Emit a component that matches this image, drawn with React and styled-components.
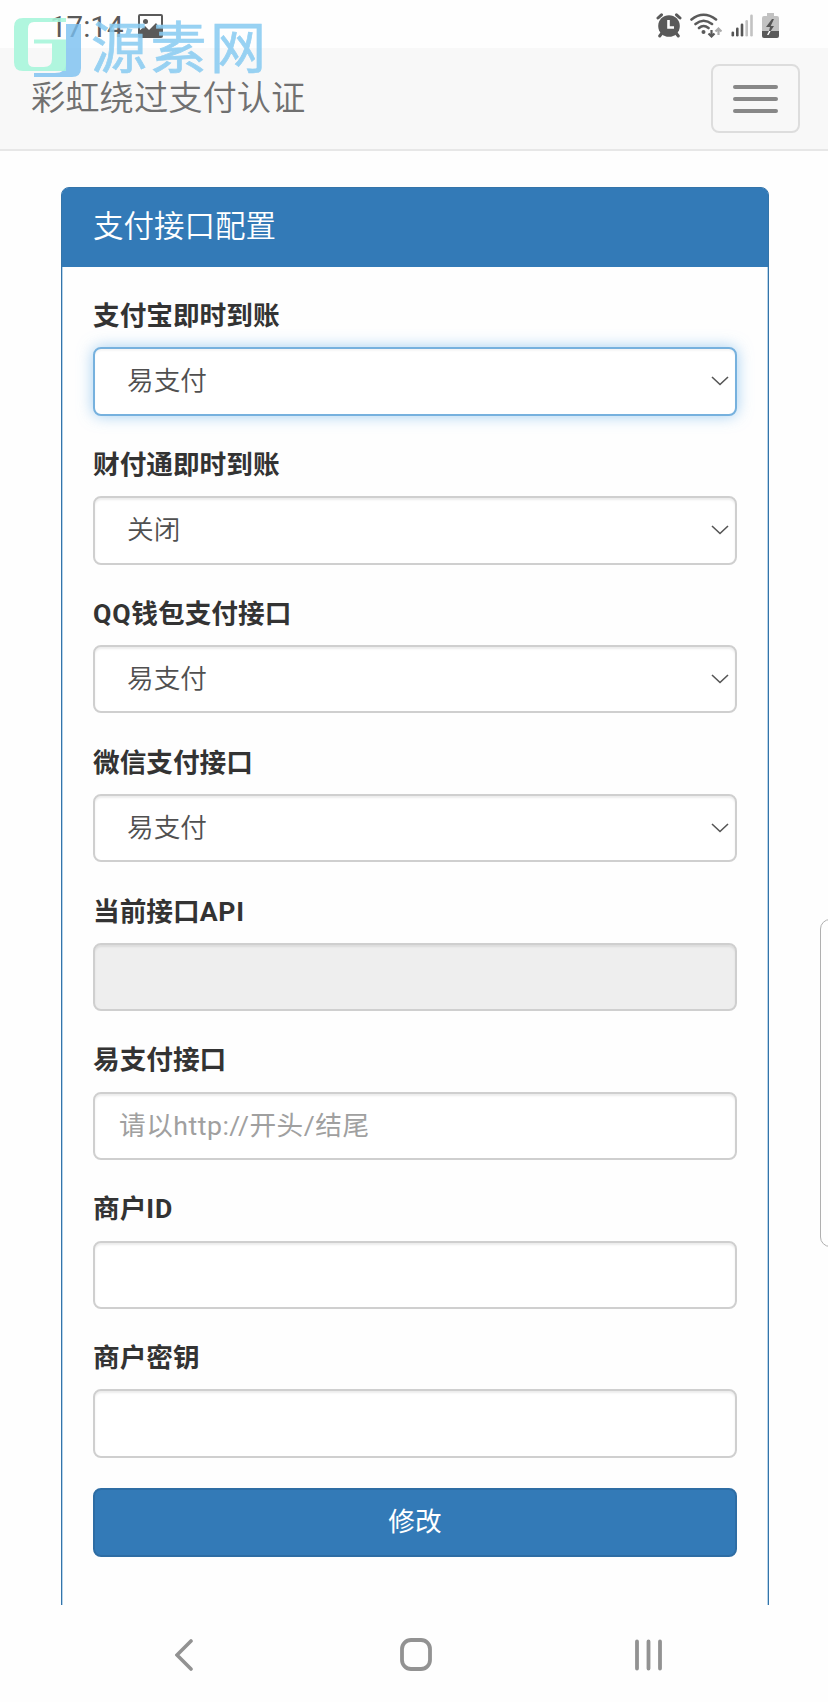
import React from "react";
import styled, { createGlobalStyle, css } from "styled-components";

const GlobalStyle = createGlobalStyle`
  * {
    box-sizing: border-box;
  }
  body {
    margin: 0;
    background: #fefefe;
    font-family: Roboto, "Noto Sans CJK SC", sans-serif;
    font-size: 26.67px;
    color: #333;
  }
`;

const Screen = styled.div`
  position: relative;
  display: flex;
  flex-direction: column;
  width: 828px;
  height: 1702px;
  overflow: hidden;
`;

const StatusBar = styled.div`
  display: flex;
  flex: none;
  align-items: center;
  justify-content: space-between;
  height: 48px;
  padding: 3px 49px 0 50px;
`;

const StatusGroup = styled.div`
  display: flex;
  align-items: center;
  gap: ${(props) => props.$gap}px;
`;

const Clock = styled.span`
  font-size: 29.5px;
  line-height: 40px;
  font-weight: 400;
  padding-top: 2px;
  color: #5a5a5a;
`;

const Navbar = styled.nav`
  display: flex;
  flex: none;
  align-items: center;
  justify-content: space-between;
  height: 103px;
  padding: 0 28px 0 31px;
  background: #f8f8f8;
  border-bottom: 2px solid #e7e7e7;
`;

const Brand = styled.span`
  padding-bottom: 2px;
  font-size: 34.3px;
  line-height: 40px;
  font-weight: 350;
  color: #707070;
`;

const Toggle = styled.button`
  display: flex;
  flex-direction: column;
  align-items: center;
  justify-content: center;
  gap: 8px;
  width: 89px;
  height: 69px;
  padding: 0;
  background: transparent;
  border: 2px solid #ddd;
  border-radius: 8px;
`;

const ToggleBar = styled.span`
  width: 45px;
  height: 4px;
  border-radius: 2px;
  background: #888;
`;

const Content = styled.main`
  flex: none;
  height: 1454px;
  padding: 36px 59px 0 61px;
  overflow: hidden;
`;

const Panel = styled.section`
  height: 1500px;
  border: 1px solid #3474a9;
  border-radius: 8px;
  box-shadow: inset 0 0 0 1px #b5d3ea;
`;

const PanelHeading = styled.h3`
  height: 79px;
  margin: 0;
  padding: 0 31px;
  font-size: 30.5px;
  line-height: 77px;
  font-weight: 350;
  color: #fff;
  background: #337ab7;
  border-radius: 6px 6px 0 0;
`;

const PanelBody = styled.form`
  padding: 29px 31px;
`;

const FormGroup = styled.div`
  margin-bottom: 29.2px;
`;

const Label = styled.label`
  display: block;
  height: 42px;
  margin-bottom: 9.3px;
  font-weight: 700;
  line-height: 41px;
  color: #333;
`;

const Latin = styled.span`
  letter-spacing: 0.8px;
`;

const control = css`
  width: 100%;
  height: 68.4px;
  border: 2px solid #cfcfcf;
  border-radius: 8px;
  background: #fff;
  box-shadow: inset 0 2px 2px rgba(0, 0, 0, 0.075);
`;

const SelectBox = styled.div`
  ${control}
  display: flex;
  align-items: center;
  justify-content: space-between;
  padding: 0 6px 0 32px;
  font-weight: 350;
  line-height: 40px;
  color: #505050;
  ${(props) =>
    props.$focused &&
    css`
      border-color: #76b1de;
      box-shadow: inset 0 2px 2px rgba(0, 0, 0, 0.04),
        0 0 15px rgba(102, 175, 233, 0.6);
    `}
`;

const Input = styled.input`
  ${control}
  display: block;
  padding: 0 24px;
  font: inherit;
  letter-spacing: 0.5px;
  color: #555;
  outline: none;

  &::placeholder {
    color: #a0a0a0;
    opacity: 1;
  }
  &:disabled {
    background: #eee;
  }
`;

const SubmitButton = styled.button`
  display: block;
  width: 100%;
  height: 69px;
  margin-top: 30px;
  padding: 0 0 5px;
  font: inherit;
  color: #fff;
  background: #337ab7;
  border: 2px solid #2e6da4;
  border-radius: 8px;
`;

const SystemNav = styled.div`
  display: flex;
  flex: 1;
  align-items: center;
  justify-content: space-between;
  padding: 2px 165px 0 175px;
`;

const HomeSlot = styled.span`
  display: flex;
  margin-left: 5px;
`;

const EdgeHandle = styled.div`
  position: absolute;
  top: 919px;
  right: -12px;
  width: 20px;
  height: 328px;
  border: 1px solid #b0b0b0;
  border-radius: 12px;
`;

const Watermark = styled.div`
  position: absolute;
  top: 16px;
  left: 12px;
  display: flex;
  align-items: flex-start;
`;

const WatermarkText = styled.span`
  margin: -4px 0 0 9px;
  font-family: "Noto Sans CJK SC", sans-serif;
  font-size: 56px;
  line-height: 64px;
  font-weight: 400;
  letter-spacing: 3.5px;
  color: #8accf2;
  -webkit-text-stroke: 0.7px #8accf2;
  opacity: 0.88;
`;

const PictureIcon = () => (
  <svg width="25" height="24" viewBox="0 0 25 24">
    <rect x="1" y="1" width="23" height="22" rx="1" fill="none" stroke="#5a5a5a" strokeWidth="2" />
    <circle cx="7.5" cy="7.5" r="2.5" fill="#5a5a5a" />
    <path d="M1 17l6-5 4 4 7-7 3 4 3-1v11H1z" fill="#5a5a5a" />
  </svg>
);

const AlarmIcon = () => (
  <svg width="26" height="25" viewBox="0 0 26 25">
    <g stroke="#5a5a5a" strokeWidth="3" strokeLinecap="round">
      <path d="M2 5l3.5-3.2M24 5l-3.5-3.2M6 20l-2.3 3M20 20l2.3 3" />
    </g>
    <circle cx="13" cy="13" r="10.8" fill="#5a5a5a" />
    <path d="M12.5 7v7.5H18" fill="none" stroke="#fff" strokeWidth="2.6" />
  </svg>
);

const WifiIcon = () => (
  <svg width="32" height="25" viewBox="0 0 32 25">
    <g fill="none" stroke="#5a5a5a" strokeWidth="2.6" strokeLinecap="round">
      <path d="M1.5 6.5Q13.5-3 26 6.5M5.5 11Q13.5 4.5 22 11M9 15Q13.5 11 18.5 15" />
    </g>
    <circle cx="13.5" cy="19" r="2" fill="#5a5a5a" />
    <path d="M21.5 17v6M18.5 20.5l3 3 3-3" fill="none" stroke="#5a5a5a" strokeWidth="2.2" />
    <path d="M28.5 22v-6M25.5 18.5l3-3 3 3" fill="none" stroke="#aaa" strokeWidth="2.2" />
  </svg>
);

const SignalIcon = () => (
  <svg width="23" height="23" viewBox="0 0 23 23">
    <rect x="0.5" y="17.5" width="2.6" height="5" rx="1.3" fill="#555" />
    <rect x="5" y="13.5" width="2.6" height="9" rx="1.3" fill="#555" />
    <rect x="9.7" y="9.5" width="2.6" height="13" rx="1.3" fill="#555" />
    <rect x="14.4" y="6" width="2.6" height="16.5" rx="1.3" fill="#c2c2c2" />
    <rect x="19.2" y="0.5" width="2.6" height="22" rx="1.3" fill="#c2c2c2" />
  </svg>
);

const BatteryIcon = () => (
  <svg width="17" height="25" viewBox="0 0 17 25">
    <path d="M5 0h7v3h3q2 0 2 2v13H0V5q0-2 2-2h3z" fill="#c2c2c2" />
    <path d="M0 18h17v5q0 2-2 2H2q-2 0-2-2z" fill="#5a5a5a" />
    <path d="M10 6L4 14h4l-2 8 6-9H8.7L12 6z" fill="#555" />
    <path d="M7 18h1.7L6.5 22H5z" fill="#fff" />
  </svg>
);

const ChevronIcon = () => (
  <svg width="18" height="10" viewBox="0 0 18 10">
    <path d="M1 1l8 7.5L17 1" fill="none" stroke="#555" strokeWidth="1.6" />
  </svg>
);

const BackIcon = () => (
  <svg width="18" height="32" viewBox="0 0 18 32">
    <path d="M16 2L2 16l14 14" fill="none" stroke="#929292" strokeWidth="3.6" strokeLinecap="round" />
  </svg>
);

const HomeIcon = () => (
  <svg width="32" height="33" viewBox="0 0 32 33">
    <rect x="2" y="2" width="28" height="29" rx="9" fill="none" stroke="#929292" strokeWidth="3.8" />
  </svg>
);

const RecentsIcon = () => (
  <svg width="29" height="32" viewBox="0 0 29 32">
    <path d="M3 2.5v27M14.5 2.5v27M26 2.5v27" stroke="#929292" strokeWidth="3.8" strokeLinecap="round" />
  </svg>
);

const WatermarkLogo = () => (
  <svg width="70" height="64" viewBox="12 16 70 64">
    <path
      d="M66 24h15v44q0 9-9 9H34v-4h21q11 0 11-10z"
      fill="#79bff0"
      opacity="0.8"
    />
    <path
      d="M66 18v4H34q-6 0-6 7v32q0 6 6 6h10q8 0 8-8V43.5H34v-4h32V71H23q-9 0-9-9V27q0-9 9-9z"
      fill="#a5f5da"
      opacity="0.88"
    />
  </svg>
);

const selects = [
  { label: "支付宝即时到账", value: "易支付", focused: true },
  { label: "财付通即时到账", value: "关闭" },
  { label: "QQ钱包支付接口", value: "易支付" },
  { label: "微信支付接口", value: "易支付" },
];

const inputs = [
  { label: "当前接口API", disabled: true },
  { label: "易支付接口", placeholder: "请以http://开头/结尾" },
  { label: "商户ID" },
  { label: "商户密钥" },
];

const FieldLabel = ({ text }) => (
  <Label>
    {text
      .split(/([A-Z]+)/)
      .map((part, index) =>
        /[A-Z]/.test(part) ? <Latin key={index}>{part}</Latin> : part
      )}
  </Label>
);

const App = () => {
  return (
    <Screen>
      <GlobalStyle />
      <StatusBar>
        <StatusGroup $gap={15}>
          <Clock>17:14</Clock>
          <PictureIcon />
        </StatusGroup>
        <StatusGroup $gap={8.5}>
          <AlarmIcon />
          <WifiIcon />
          <SignalIcon />
          <BatteryIcon />
        </StatusGroup>
      </StatusBar>
      <Navbar>
        <Brand>彩虹绕过支付认证</Brand>
        <Toggle type="button">
          <ToggleBar />
          <ToggleBar />
          <ToggleBar />
        </Toggle>
      </Navbar>
      <Content>
        <Panel>
          <PanelHeading>支付接口配置</PanelHeading>
          <PanelBody>
            {selects.map(({ label, value, focused }) => (
              <FormGroup key={label}>
                <FieldLabel text={label} />
                <SelectBox $focused={focused}>
                  {value}
                  <ChevronIcon />
                </SelectBox>
              </FormGroup>
            ))}
            {inputs.map(({ label, ...rest }) => (
              <FormGroup key={label}>
                <FieldLabel text={label} />
                <Input {...rest} />
              </FormGroup>
            ))}
            <SubmitButton type="button">修改</SubmitButton>
          </PanelBody>
        </Panel>
      </Content>
      <SystemNav>
        <BackIcon />
        <HomeSlot>
          <HomeIcon />
        </HomeSlot>
        <RecentsIcon />
      </SystemNav>
      <EdgeHandle />
      <Watermark>
        <WatermarkLogo />
        <WatermarkText>源素网</WatermarkText>
      </Watermark>
    </Screen>
  );
};

export default App;
